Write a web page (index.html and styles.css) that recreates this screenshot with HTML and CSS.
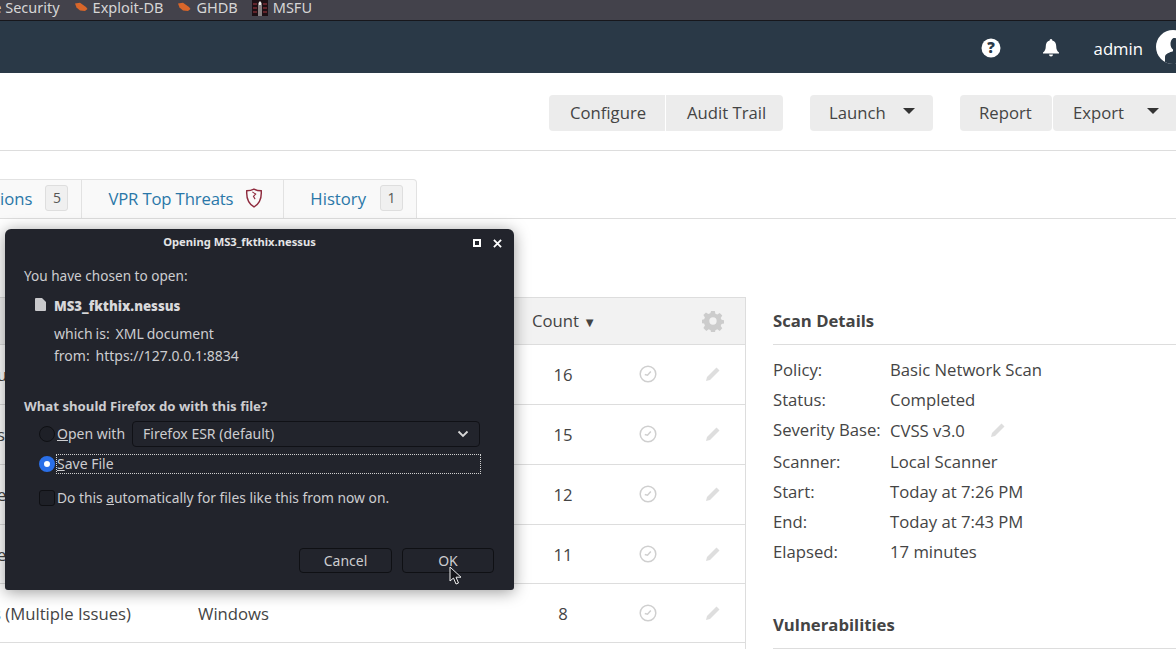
FILE: index.html
```html
<!DOCTYPE html>
<html>
<head>
  <title>MS3_fkthix - Nessus</title>
  <link rel="stylesheet" href="styles.css">
</head>
<body>

  <!-- Browser bookmarks, cut off on the left -->
  <div class="bookmarks">
    <span>Offensive Security</span>
    <svg class="bug" viewBox="0 0 14 10"><path d="M1 1.500 6 .8l6 4.200 1.500 2-2.500 2L6 8.400 2.500 5.500z"/></svg>
    <span>Exploit-DB</span>
    <svg class="bug" viewBox="0 0 14 10"><path d="M1 1.500 6 .8l6 4.200 1.500 2-2.500 2L6 8.400 2.500 5.500z"/></svg>
    <span>GHDB</span>
    <svg class="msfu" viewBox="0 0 16 16">
      <rect width="16" height="16" fill="#1d1015"/>
      <path d="M1 4h4M1 8h4M1 12h4M11 4h4M11 8h4M11 12h4" stroke="#7a2b33" stroke-width="1.500"/>
      <path d="M6.500 16V3l1.500-2 1.500 2v13h-1V5h-1v11z" fill="#f1f1f1"/>
    </svg>
    <span>MSFU</span>
  </div>

  <header class="topbar">
    <svg class="top-icon" viewBox="0 0 20 20">
      <circle cx="10" cy="10" r="9.500" fill="#fff"/>
      <text x="10" y="15" class="help-mark">?</text>
    </svg>
    <svg class="top-icon bell" viewBox="0 0 20 20">
      <path fill="#fff" d="M10 1a1.300 1.300 0 0 1 1.300 1.500C14 3.200 15.200 5.400 15.200 8c0 3.500 1 5 2.800 6.600v.9H2v-.9C3.800 13 4.800 11.500 4.800 8c0-2.600 1.200-4.800 3.900-5.500A1.300 1.300 0 0 1 10 1z"/>
      <path fill="#fff" d="M8 16.500h4a2 2 0 0 1-4 0z"/>
    </svg>
    <span class="user-name">admin</span>
    <span class="avatar">
      <svg viewBox="0 0 34 34"><path fill="#2a3947" d="M18 8c3.500 0 5.500 2.600 5.500 6 0 2.500-1 4.500-2.500 5.600v1.600c3 1 8 2.400 8 5.800v7H9v-7c0-3.400 5-4.800 8-5.800v-1.600c-1.500-1.100-2.500-3.100-2.500-5.600 0-3.400 2-6 3.500-6z"/></svg>
    </span>
  </header>

  <div class="toolbar">
    <div class="btn-group">
      <button class="btn btn-configure">Configure</button>
      <button class="btn btn-audit">Audit Trail</button>
    </div>
    <button class="btn btn-menu btn-launch">Launch <i class="caret"></i></button>
    <div class="btn-group btn-group-last">
      <button class="btn btn-report">Report</button>
      <button class="btn btn-menu btn-export">Export <i class="caret"></i></button>
    </div>
  </div>

  <div class="tabs">
    <div class="tab">Remediations <span class="count">5</span></div>
    <div class="tab tab-vpr">VPR Top Threats
      <svg class="shield" viewBox="0 0 16 18">
        <path d="M8 1c2 1 4.500 1.500 6.500 1.500C15 9 13 14 8 17 3 14 1 9 1.500 2.500 3.500 2.500 6 2 8 1z" fill="none" stroke="#8f2b3e" stroke-width="1.300"/>
        <path d="M6.500 3.500 9.500 5.500 7.500 7.500 9 10" fill="none" stroke="#8f2b3e" stroke-width="1"/>
      </svg>
    </div>
    <div class="tab">History <span class="count">1</span></div>
  </div>

  <main class="content">
    <section class="vuln-table">
      <div class="row row-head">
        <div class="cell-name"></div>
        <div class="cell-family"></div>
        <div class="cell-count">Count <small>&#9660;</small></div>
        <div class="cell-clock"></div>
        <div class="cell-edit">
          <svg class="gear" viewBox="0 0 24 24"><path fill="#cccccc" fill-rule="evenodd" d="M10 1h4l.6 3 2.100.9 2.600-1.700 2.800 2.800-1.700 2.600.9 2.100 3 .6v3.400l-3 .6-.9 2.100 1.700 2.600-2.800 2.800-2.600-1.700-2.100.9-.6 3h-4l-.6-3-2.100-.9-2.600 1.700L1.500 19.500l1.700-2.600-.9-2.100-3-.6v-3.400l3-.6.9-2.100L1.500 5.500l2.800-2.800 2.600 1.700L9 3.500zM12 8a4 4 0 1 0 0 8 4 4 0 0 0 0-8z"/></svg>
        </div>
      </div>
      <div class="row row-60">
        <div class="cell-name">u</div>
        <div class="cell-family"></div>
        <div class="cell-count">16</div>
        <div class="cell-clock"><svg class="clock" viewBox="0 0 18 18"><circle cx="9" cy="9" r="7.800"/><path d="M5.800 9.500 8.500 10.200 11.800 6.500"/></svg></div>
        <div class="cell-edit"><svg class="pencil" viewBox="0 0 16 16"><path d="M11.500 1.500 14.500 4.500 5 14 1 15 2 11z"/></svg></div>
      </div>
      <div class="row row-60">
        <div class="cell-name">s</div>
        <div class="cell-family"></div>
        <div class="cell-count">15</div>
        <div class="cell-clock"><svg class="clock" viewBox="0 0 18 18"><circle cx="9" cy="9" r="7.800"/><path d="M5.800 9.500 8.500 10.200 11.800 6.500"/></svg></div>
        <div class="cell-edit"><svg class="pencil" viewBox="0 0 16 16"><path d="M11.500 1.500 14.500 4.500 5 14 1 15 2 11z"/></svg></div>
      </div>
      <div class="row row-60">
        <div class="cell-name">e</div>
        <div class="cell-family"></div>
        <div class="cell-count">12</div>
        <div class="cell-clock"><svg class="clock" viewBox="0 0 18 18"><circle cx="9" cy="9" r="7.800"/><path d="M5.800 9.500 8.500 10.200 11.800 6.500"/></svg></div>
        <div class="cell-edit"><svg class="pencil" viewBox="0 0 16 16"><path d="M11.500 1.500 14.500 4.500 5 14 1 15 2 11z"/></svg></div>
      </div>
      <div class="row row-59">
        <div class="cell-name">e</div>
        <div class="cell-family"></div>
        <div class="cell-count">11</div>
        <div class="cell-clock"><svg class="clock" viewBox="0 0 18 18"><circle cx="9" cy="9" r="7.800"/><path d="M5.800 9.500 8.500 10.200 11.800 6.500"/></svg></div>
        <div class="cell-edit"><svg class="pencil" viewBox="0 0 16 16"><path d="M11.500 1.500 14.500 4.500 5 14 1 15 2 11z"/></svg></div>
      </div>
      <div class="row row-59">
        <div class="cell-name cell-name-long">s (Multiple Issues)</div>
        <div class="cell-family">Windows</div>
        <div class="cell-count">8</div>
        <div class="cell-clock"><svg class="clock" viewBox="0 0 18 18"><circle cx="9" cy="9" r="7.800"/><path d="M5.800 9.500 8.500 10.200 11.800 6.500"/></svg></div>
        <div class="cell-edit"><svg class="pencil" viewBox="0 0 16 16"><path d="M11.500 1.500 14.500 4.500 5 14 1 15 2 11z"/></svg></div>
      </div>
    </section>

    <aside class="details">
      <h3>Scan Details</h3>
      <dl class="detail-list">
        <div class="detail"><dt>Policy:</dt><dd>Basic Network Scan</dd></div>
        <div class="detail"><dt>Status:</dt><dd>Completed</dd></div>
        <div class="detail detail-severity"><dt>Severity Base:</dt><dd>CVSS v3.0 <svg class="pencil pencil-inline" viewBox="0 0 16 16"><path d="M11.500 1.500 14.500 4.500 5 14 1 15 2 11z"/></svg></dd></div>
        <div class="detail"><dt>Scanner:</dt><dd>Local Scanner</dd></div>
        <div class="detail"><dt>Start:</dt><dd>Today at 7:26 PM</dd></div>
        <div class="detail"><dt>End:</dt><dd>Today at 7:43 PM</dd></div>
        <div class="detail"><dt>Elapsed:</dt><dd>17 minutes</dd></div>
      </dl>
      <h3 class="vuln-title">Vulnerabilities</h3>
    </aside>
  </main>

  <!-- Firefox download window, sits over the page -->
  <div class="dialog">
    <div class="dialog-title">
      <span>Opening MS3_fkthix.nessus</span>
      <i class="win-max"></i>
      <svg class="win-close" viewBox="0 0 10 10"><path d="M1 1 9 9M9 1 1 9"/></svg>
    </div>
    <p class="chosen">You have chosen to open:</p>
    <div class="file-row">
      <svg class="file-icon" viewBox="0 0 11 13"><path d="M0 1a1 1 0 0 1 1-1h6l4 4v8a1 1 0 0 1-1 1H1a1 1 0 0 1-1-1z"/></svg>
      <b>MS3_fkthix.nessus</b>
    </div>
    <p class="file-info file-type">which is:&nbsp; XML document</p>
    <p class="file-info">from:&nbsp; https://127.0.0.1:8834</p>
    <p class="question">What should Firefox do with this file?</p>
    <div class="option option-open">
      <i class="radio"></i>
      <span class="option-label"><u>O</u>pen with</span>
      <div class="select">Firefox ESR (default)
        <svg viewBox="0 0 12 8"><path d="M1.500 1.500 6 6l4.500-4.500"/></svg>
      </div>
    </div>
    <div class="option option-save">
      <i class="radio radio-on"></i>
      <span class="option-label focus-box"><u>S</u>ave File</span>
    </div>
    <div class="option option-auto">
      <i class="check"></i>
      <span class="option-label">Do this <u>a</u>utomatically for files like this from now on.</span>
    </div>
    <div class="dialog-actions">
      <button class="dlg-btn dlg-cancel">Cancel</button>
      <button class="dlg-btn dlg-ok">OK</button>
    </div>
  </div>

  <svg class="cursor" viewBox="0 0 13 19"><path d="M1 1v14l3.500-3 2.500 6 2.500-1-2.500-5.800H12z"/></svg>

</body>
</html>
```

FILE: styles.css
```css
html, body {
  margin: 0;
  height: 656px;
  overflow: hidden;
}

body {
  font-family: "Open Sans", sans-serif;
  font-size: 16.7px;
  color: #444;
  background: #fff;
}

/* bookmarks */
.bookmarks {
  width: 312px;
  height: 20px;
  display: flex;
  justify-content: flex-end;
  align-items: flex-start;
  font-family: "Noto Sans", sans-serif;
  font-size: 14.5px;
  line-height: 14px;
  white-space: nowrap;
  color: #d6d6d6;
}

.bookmarks span {
  flex: none;
}

.bookmarks::before {
  content: "";
  position: absolute;
  top: 0;
  left: 0;
  width: 1176px;
  height: 20px;
  background: #43424b;
  z-index: -1;
}

.bug {
  flex: none;
  width: 14px;
  height: 10px;
  margin: 2px 5px 0 14px;
  fill: #d8662a;
}

.msfu {
  flex: none;
  width: 16px;
  height: 16px;
  margin: 0 5px 0 14px;
}

/* top bar */
.topbar {
  height: 52px;
  border-top: 1px solid #17171c;
  display: flex;
  justify-content: flex-end;
  align-items: center;
  background: #2a3947;
  color: #fff;
}

.top-icon {
  width: 20px;
  height: 20px;
  margin: 2px 40px 0 0;
}

.bell {
  margin-right: 33px;
}

.help-mark {
  font-family: "Open Sans", sans-serif;
  font-size: 15px;
  font-weight: 800;
  text-anchor: middle;
  fill: #2a3947;
}

.user-name {
  margin: 2px 13px 0 0;
}

.avatar {
  flex: none;
  width: 34px;
  height: 34px;
  margin-right: -14px;
  border-radius: 50%;
  background: #fff;
  overflow: hidden;
}

.avatar svg {
  display: block;
}

/* toolbar */
.toolbar {
  height: 78px;
  box-sizing: border-box;
  padding-top: 22px;
  margin-right: -2px;
  border-bottom: 1px solid #dddddd;
  display: flex;
  justify-content: flex-end;
  align-items: flex-start;
}

.btn-group {
  display: flex;
  gap: 1px;
  margin-right: 27px;
}

.btn-group-last {
  margin-right: 0;
}

.btn {
  height: 36px;
  padding: 0 0 2px;
  border: none;
  border-radius: 4px;
  background: #ececec;
  font-family: "Open Sans", sans-serif;
  font-size: 16.7px;
  color: #444;
  text-align: left;
}

.btn-configure {
  width: 116px;
  padding-left: 21px;
  border-radius: 4px 0 0 4px;
}

.btn-audit {
  width: 117px;
  padding-left: 21px;
  border-radius: 0 4px 4px 0;
}

.btn-launch {
  width: 123px;
  padding-left: 19px;
  margin-right: 27px;
}

.btn-report {
  width: 92px;
  padding-left: 19px;
}

.btn-export {
  width: 125px;
  padding-left: 20px;
}

.btn-menu {
  display: flex;
  align-items: center;
  justify-content: space-between;
  padding-right: 18px;
}

.btn-export {
  padding-right: 19px;
}

.caret {
  width: 0;
  height: 0;
  margin-top: -3px;
  border-left: 6px solid transparent;
  border-right: 6px solid transparent;
  border-top: 6px solid #333;
}

/* tabs */
.tabs {
  width: 417px;
  height: 39px;
  margin-top: 28px;
  display: flex;
  justify-content: flex-end;
}

.tabs::after {
  content: "";
  position: absolute;
  top: 218px;
  left: 0;
  width: 1176px;
  border-top: 1px solid #dddddd;
}

.tab {
  flex: none;
  display: flex;
  align-items: center;
  box-sizing: border-box;
  height: 40px;
  padding: 0 13px 2px 26px;
  border: 1px solid #e2e2e2;
  border-left: none;
  background: #f9f9f9;
  color: #2a77a8;
  white-space: nowrap;
}

.tab:last-child {
  border-radius: 0 4px 0 0;
}

.tab-vpr {
  padding-right: 20px;
  letter-spacing: -0.15px;
}

.count {
  margin-left: 13px;
  width: 23px;
  height: 26px;
  line-height: 24px;
  box-sizing: border-box;
  border: 1px solid #dedede;
  border-radius: 3px;
  background: #f0f0f0;
  color: #555;
  font-size: 14px;
  text-align: center;
}

.tab:last-child .count {
  margin-left: 14px;
}

.shield {
  width: 18px;
  height: 20px;
  margin-left: 12px;
}

/* table and details */
.content {
  display: flex;
  margin-top: 79px;
  margin-left: -20px;
}

.vuln-table {
  flex: none;
  width: 766px;
  box-sizing: border-box;
  border-right: 1px solid #dddddd;
  border-top: 1px solid #dddddd;
}

.row {
  display: flex;
  align-items: center;
  box-sizing: border-box;
  border-bottom: 1px solid #dddddd;
  white-space: nowrap;
}

.row-head {
  height: 47px;
  padding-bottom: 1px;
  background: #f2f2f2;
}

.row-59 {
  height: 59px;
}

.row-60 {
  height: 60px;
  padding-bottom: 1px;
}

.cell-name {
  flex: none;
  width: 218px;
  box-sizing: border-box;
  padding-left: 17px;
}

.cell-name-long {
  padding-left: 13px;
}

.cell-family {
  flex: none;
  width: 330px;
}

.cell-count {
  flex: none;
  width: 70px;
  text-align: center;
}

.row-head .cell-count {
  box-sizing: border-box;
  padding-left: 4px;
  text-align: left;
  overflow: visible;
}

.row-head small {
  font-size: 13px;
}

.cell-clock {
  flex: none;
  width: 100px;
  display: flex;
  justify-content: center;
}

.cell-edit {
  flex: none;
  width: 30px;
  display: flex;
  justify-content: center;
}

.clock {
  width: 18px;
  height: 18px;
  fill: none;
  stroke: #cfcfcf;
  stroke-width: 1.500;
}

.pencil {
  width: 16px;
  height: 16px;
  fill: #dedede;
}

.gear {
  width: 22px;
  height: 22px;
  margin-left: -1px;
}

.details {
  flex: none;
  width: 420px;
  margin-left: 27px;
}

.details h3 {
  margin: 0;
  height: 48px;
  box-sizing: border-box;
  line-height: 48px;
  border-bottom: 1px solid #dddddd;
  font-size: 16.7px;
  font-weight: 700;
  color: #444;
}

.detail-list {
  margin: 10px 0 0;
}

.detail {
  display: flex;
  height: 30px;
  line-height: 30px;
}

.detail-severity {
  height: 32px;
}

.detail dt {
  flex: none;
  width: 117px;
}

.detail dd {
  margin: 0;
  display: flex;
  align-items: center;
}

.pencil-inline {
  margin-left: 25px;
  margin-bottom: 2px;
}

.details .vuln-title {
  margin-top: 34px;
}

/* download dialog */
.dialog {
  position: absolute;
  left: 5px;
  top: 229px;
  width: 509px;
  height: 361px;
  box-sizing: border-box;
  padding: 0 19px;
  border-radius: 6px 6px 3px 3px;
  background: #22242c;
  box-shadow: 0 2px 16px rgba(0, 0, 0, 0.4);
  font-family: "Noto Sans", sans-serif;
  font-size: 14px;
  line-height: 20px;
  color: #cdcdd0;
}

.dialog p {
  margin: 0;
}

.dialog-title {
  height: 26px;
  margin: 0 -19px;
  padding-right: 40px;
  display: flex;
  align-items: center;
  justify-content: center;
  font-size: 11.2px;
  font-weight: 700;
  color: #e4e4e6;
}

.win-max {
  position: absolute;
  right: 33px;
  top: 10px;
  width: 8px;
  height: 8px;
  box-sizing: border-box;
  border: 2px solid #fff;
}

.win-close {
  position: absolute;
  right: 12px;
  top: 10px;
  width: 9px;
  height: 9px;
  fill: none;
  stroke: #fff;
  stroke-width: 2;
}

.dialog .chosen {
  margin-top: 11px;
  font-size: 13.6px;
}

.file-row {
  display: flex;
  align-items: center;
  margin: 10px 0 0 11px;
  font-size: 13.2px;
  font-weight: 700;
  color: #d8d8da;
}

.file-icon {
  width: 11px;
  height: 13px;
  margin-right: 8px;
  margin-top: -3px;
  fill: #c9c9cc;
}

.dialog .file-info {
  margin-left: 30px;
  line-height: 22px;
  word-spacing: -0.7px;
}

.dialog .file-type {
  margin-top: 7px;
}

.dialog .question {
  margin-top: 29px;
  font-size: 13.2px;
  font-weight: 700;
}

.option {
  display: flex;
  align-items: center;
  margin-left: 15px;
  height: 26px;
}

.option-open {
  margin-top: 5px;
}

.option-save {
  margin-top: 4px;
}

.option-auto {
  margin-top: 8px;
  font-size: 13.8px;
}

.radio, .check {
  flex: none;
  width: 16px;
  height: 16px;
  box-sizing: border-box;
  border: 1px solid #0f1014;
  background: #1e2027;
}

.radio {
  border-radius: 50%;
}

.check {
  border-radius: 3px;
}

.radio-on {
  border: 5px solid #2a6fe8;
  background: #fff;
}

.option-label {
  margin-left: 2px;
  white-space: nowrap;
}

.focus-box {
  flex: none;
  width: 425px;
  height: 20px;
  margin-left: 1px;
  box-sizing: border-box;
  border: 1px dotted #d0d0d0;
  line-height: 18px;
}

.select {
  flex: none;
  width: 348px;
  height: 26px;
  margin-left: 7px;
  padding: 0 10px;
  box-sizing: border-box;
  display: flex;
  align-items: center;
  justify-content: space-between;
  border: 1px solid #101116;
  border-radius: 4px;
  background: #22242c;
}

.select svg {
  width: 12px;
  height: 8px;
  fill: none;
  stroke: #d8d8d8;
  stroke-width: 1.800;
}

.dialog-actions {
  position: absolute;
  right: 20px;
  bottom: 17px;
  display: flex;
  gap: 10px;
}

.dlg-btn {
  width: 93px;
  height: 25px;
  padding: 0;
  border: 1px solid #0f1014;
  border-radius: 4px;
  background: #22242c;
  font-family: "Noto Sans", sans-serif;
  font-size: 14px;
  color: #cdcdd0;
}

.dlg-ok {
  width: 92px;
}

.cursor {
  position: absolute;
  left: 449px;
  top: 566px;
  width: 13px;
  height: 19px;
  fill: #16161a;
  stroke: #f0f0f0;
  stroke-width: 1;
}
```
